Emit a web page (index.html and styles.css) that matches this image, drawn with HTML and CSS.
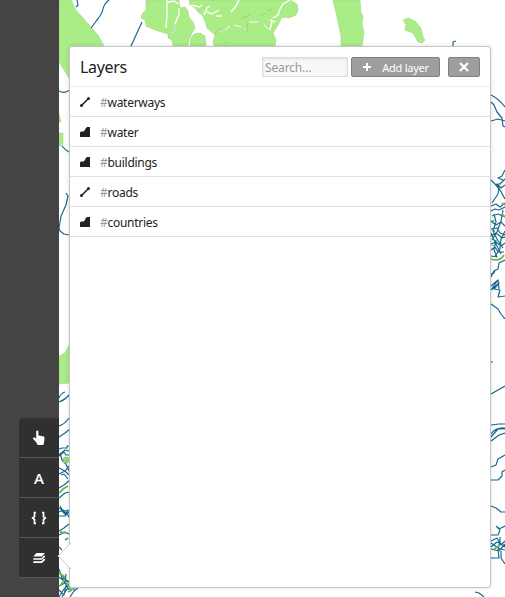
FILE: index.html
```
<!DOCTYPE html>
<html lang="en">
<head>
<meta charset="utf-8">
<title>Layers</title>
<link rel="stylesheet" href="styles.css">
</head>
<body>
<svg class="map" viewBox="0 0 505 597" aria-hidden="true">
  <g class="land">
    <path d="M59 0H71L76 10 90 26 98 35 104 46V60H70V80L66 73 59 62Z"/>
    <path d="M146 0H179L180 8 185 7 188 11 189 17 193 22 195 28 192 33 189 40 188 46H173L172 40 168 38V34L158 31 148 27 146 26 145 20 141 18 142 14 146 10Z"/>
    <path d="M190 46 191 38 194 34 200 33 205 36 206 46Z"/>
    <path d="M189 0H290L297 4 298 10 296 15 289 18 282 17 278 25 273 33 276 40 275 46H214L213 41 215 35 207 28 205 21 202 15 198 12 195 8 190 5Z"/>
    <path d="M333 0H360L361 13 363 16 362 24 364 32 362 46H341V36L338 22 336 13Z"/>
    <path d="M403 20 408 18 415 21 421 28 423 37 425 40 422 43 418 42 413 33 407 31 405 30 406 25Z"/>
    <path d="M59 114 61 122H59ZM59 133H63V143L62 146H59ZM70 343V383L59 384V356L65 353Z"/>
  </g>
  <g class="gaps">
    <path d="M167 0V15L166 28M168 2 174 1 179 4M179 8 179 14 175 24 173 34M239 0 236 6 231 12M191 5 199 7 202 5M204 15 207 8 210 6M207 12 212 14 219 10M216 16H222M290 0 283 4 280 9 278 15 273 18M270 20 275 22M272 21 270 30"/>
    <path class="thin" d="M218 31 225 30 230 26 234 25 241 27 247 31M249 22 258 22 264 25 270 30"/>
  </g>
  <g class="shade">
    <path d="M215 34 219 30 225 30M230 26 234 25M241 27 247 32 248 22M258 22 264 25M241 19 250 15M260 16 265 13M268 11 272 9M225 43 227 42M173 34 175 24"/>
  </g>
  <g class="rivers">
    <path d="M109 0Q104 4 103 9T97 20L91 28M142 22 131 46M77 0 78 5 76 7M59 91Q64 94 70 90M62 146Q65 150 69 152M66 193 68 196 66 205 61 216 59 228 60 231 64 234 69 235M456 41 453 42V46"/>
    <path d="M491 95Q499 99 505 107M491 102 494 105 497 112 502 118 503 126 505 127M491 121 498 119 505 121"/>
    <path d="M505 170 502 176 498 178 503 180M505 179 500 184 497 184 501 188 505 185M491 180 495 184 500 190 505 199M496 184 499 188 498 194 492 203M491 206 496 204 500 207 505 203M491 211 495 209 499 210 505 207M492 216 498 214 505 217M491 221 496 225 501 222 505 226M491 229 497 228 500 233 505 235M491 236 496 233 502 238 505 237M494 214 496 222 493 231 497 239 503 248M503 210 501 221 497 232 492 240M491 244 496 242 501 246 505 243M491 250 495 247 498 252 504 252M496 240 494 250 497 257 491 256M505 231 501 239 500 249 495 256M491 233 495 242 501 254M505 260 499 263 498 269 494 271 491 277"/>
    <path d="M491 274 494 273 495 270M491 286 498 280 491 290 499 283 494 289 500 290 498 297 505 296M498 280 499 289M491 304 498 309 501 314 505 319M491 362H493M491 394 505 386"/>
    <path d="M491 425 499 424H505M491 434Q496 427 505 428M491 437 498 429H505M491 441 499 435 505 433M491 467 496 465 498 459 505 455M491 480H498L502 476V472L505 470M491 506 496 508 501 512H505M505 526 499 529 496 526M498 527 500 530 498 535H491M500 537V543L505 547M491 547 497 542 505 546M491 541 497 538 501 545 505 541M491 549 499 551 505 544M491 543 500 549 505 550M491 558H499L498 550 500 541M501 551V558L505 564M475 592 479 593 484 597"/>
    <path d="M59 398Q61 393 65 392M59 402Q65 400 70 394M59 426Q65 424 69 418M59 437 65 433 70 429M59 449 62 448H67V446H70M59 455 65 450 69 451M59 456 64 452 66 455 70 455M60 453 62 460 66 464 69 471M59 468 65 471 69 475M59 474 65 471 69 466M61 475 64 474 68 479M59 488 64 485 70 480M59 498 65 493 70 492M59 508 64 511 69 510M59 512 63 510 67 514M59 516 65 516 70 511M60 506 64 513 68 515 70 519M61 510 65 514 68 511M59 531 64 528 69 524M59 535 65 532 69 534M65 540 68 538M59 547 62 550M61 574 65 579 69 582M59 569 62 578 69 582M59 577 64 581 69 590M59 586 65 583 66 574M59 597 64 589 70 583M62 597 67 589 75 589M70 597 74 591 78 588M59 590 64 595 67 580"/>
  </g>
  <g class="growth"><path d="M59 493 63 489 68 486M60 532 67 533M59 573 65 577M60 586 65 579M68 592 72 590M66 582 70 588M494 549 499 546M502 203 505 205M502 214 505 217M492 221H494M494 231H495M493 245 493 246M491 259Q500 262 504 255"/></g>
  <circle class="pond" cx="66" cy="460" r="3"/>
</svg>

<div class="app">
  <aside class="sidebar">
    <nav class="tabs">
      <a class="tab"><svg width="14" height="16" viewBox="0 0 14 16"><path d="M4.2 1.2q1.1-1.2 2.2 0V5.6q1.2-.6 2 .4 1.2-.6 2 .4 1.5-.4 2 .8V10.5L11.4 15H5.6L4 12 1.2 9Q.6 7.4 2 7.2L4.2 8.6Z"/></svg></a>
      <a class="tab letter">A</a>
      <a class="tab"><svg class="braces" width="16" height="14" viewBox="0 0 16 14"><path d="M5 1.5H3.5V5.5L1.7 7l1.8 1.5V12.5H5M11 1.5h1.5V5.5L14.3 7l-1.8 1.5V12.5H11"/></svg></a>
      <a class="tab"><svg width="14" height="12" viewBox="0 0 14 12"><path d="M4.5 1H13L10 4.6H1.2Z"/><path class="sheet" d="M1.3 7H9.6L12.8 4M1.3 10.2H9.6L12.8 7.2"/></svg></a>
    </nav>
  </aside>
  <main class="panel">
    <svg class="pointer" width="14" height="26" viewBox="0 0 14 26"><path d="M14 0 1 13 14 26"/></svg>
    <header class="head">
      <h1>Layers</h1>
      <input class="search" placeholder="Search..." aria-label="Search">
      <button class="button add"><svg width="8" height="8" viewBox="0 0 8 8"><path d="M4 0V8M0 4H8"/></svg><span>Add layer</span></button>
      <button class="button close" aria-label="Close"><svg width="10" height="10" viewBox="0 0 10 10"><path d="M1 1 9 9M9 1 1 9"/></svg></button>
    </header>
    <ul class="layers">
      <li><svg width="10" height="10" viewBox="0 0 10 10"><path class="line" d="M1.5 8.5 8.5 1.5"/><circle cx="1.5" cy="8.5" r="1.5"/><circle cx="8.5" cy="1.5" r="1.5"/></svg><span><i>#</i>waterways</span></li>
      <li><svg width="10" height="10" viewBox="0 0 10 10"><path d="M0 5.5 1 4.5H3.5L5 3 5.5 1.5 7 0H10V10H0Z"/></svg><span><i>#</i>water</span></li>
      <li><svg width="10" height="10" viewBox="0 0 10 10"><path d="M0 5.5 1 4.5H3.5L5 3 5.5 1.5 7 0H10V10H0Z"/></svg><span><i>#</i>buildings</span></li>
      <li><svg width="10" height="10" viewBox="0 0 10 10"><path class="line" d="M1.5 8.5 8.5 1.5"/><circle cx="1.5" cy="8.5" r="1.5"/><circle cx="8.5" cy="1.5" r="1.5"/></svg><span><i>#</i>roads</span></li>
      <li><svg width="10" height="10" viewBox="0 0 10 10"><path d="M0 5.5 1 4.5H3.5L5 3 5.5 1.5 7 0H10V10H0Z"/></svg><span><i>#</i>countries</span></li>
    </ul>
  </main>
</div>
</body>
</html>
```
FILE: styles.css
```
* { box-sizing: border-box; }
body { margin: 0; height: 597px; overflow: hidden; background: #fff; color: #222; font: 12px/20px "Noto Sans", "Open Sans", sans-serif; }
svg { display: block; flex: none; }
.map { position: absolute; top: 0; left: 0; width: 505px; height: 597px; }
.land { fill: #aaec85; stroke: #9ccf80; stroke-width: .5; }
.gaps { fill: none; stroke: #fff; stroke-width: 1.4; }
.thin { stroke-width: 1; }
.shade { fill: none; stroke: #94bd7c; stroke-width: .7; }
.rivers { fill: none; stroke: #17698f; stroke-width: 1.2; stroke-linejoin: round; }
.growth { fill: none; stroke: #6db850; stroke-width: 1.8; }
.pond { fill: #8fe070; stroke: #7cae68; stroke-width: .6; }
.app { position: relative; display: flex; height: 597px; }
.sidebar { display: flex; flex-direction: column; justify-content: flex-end; align-items: flex-end; width: 59px; padding-bottom: 19px; background: #444; }
.tabs { width: 40px; border-bottom: 1px solid #555; border-radius: 3px 0 0 3px; overflow: hidden; }
.tab { display: flex; align-items: center; justify-content: center; height: 40px; background: #303030; color: #fff; fill: #fff; border-bottom: 1px solid #555; }
.tab:last-child { height: 39px; border: 0; }
.letter { font: 600 15px/20px "Open Sans", "Noto Sans", sans-serif; }
.braces { fill: none; stroke: #fff; stroke-width: 1.7; }
.sheet { fill: none; stroke: #fff; stroke-width: 1.7; }
.panel { position: relative; width: 422px; height: 542px; margin: 46px 0 0 10px; background: #fff; border: 1px solid #c5c5c5; border-radius: 3px; box-shadow: 0 0 5px rgba(0,0,0,.12); }
.pointer { position: absolute; left: -13px; top: 496px; fill: #fff; stroke: #ccc; }
.head { display: flex; align-items: center; height: 40px; padding: 0 10px; border-bottom: 1px solid #eee; }
h1 { flex: 1; margin: 0; font-size: 16px; font-weight: 400; line-height: 20px; letter-spacing: -.35px; }
.search { width: 86px; height: 20px; margin-right: 3px; padding: 2px 2px 0; background: #f8f8f8; border: 1px solid #ddd; border-radius: 0; box-shadow: inset 0 1px 3px #ddd; font: 12px/16px "Noto Sans", sans-serif; letter-spacing: -.15px; }
.search::placeholder { color: #999; opacity: 1; }
.button { display: flex; align-items: center; justify-content: center; height: 20px; padding: 0; color: #fff; background: #9e9e9e; border: 1px solid #808080; border-radius: 2px; font: 11px/18px "Noto Sans", sans-serif; }
.button path { fill: none; stroke: #fff; stroke-width: 2; }
.button span { padding-top: 2px; letter-spacing: -.25px; }
.add { width: 89px; gap: 11px; padding-left: 1px; margin-right: 8px; }
.close { width: 32px; }
.close path { stroke-width: 2.4; }
.layers { margin: 0; padding: 0; list-style: none; }
.layers li { display: flex; align-items: center; gap: 10px; height: 30px; padding: 0 10px; border-bottom: 1px solid #e2e2e2; fill: #222; }
.layers li span { padding-top: 2px; letter-spacing: -.27px; }
.layers i { color: #999; font-style: normal; }
.line { stroke: #222; stroke-width: 1.6; }
```
